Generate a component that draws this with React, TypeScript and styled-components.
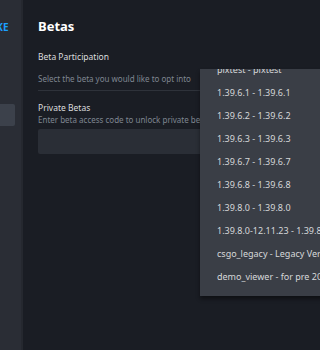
import React from "react";
import styled, { createGlobalStyle } from "styled-components";

const GlobalStyle = createGlobalStyle`
  html, body {
    margin: 0;
    padding: 0;
    background: #1a1d24;
  }
  body {
    font-family: "Noto Sans", "Open Sans", sans-serif;
  }
`;

const Page = styled.div`
  display: flex;
  width: 320px;
  height: 350px;
  overflow: hidden;
  position: relative;
  background: #1a1d24;
`;

const Sidebar = styled.div`
  width: 21px;
  flex-shrink: 0;
  background: #2a2d35;
  border-right: 2px solid #25282f;
  padding-top: 20px;
  overflow: hidden;
`;

const Brand = styled.div`
  width: 9px;
  height: 14px;
  overflow: hidden;
  direction: rtl;
  color: #1a9fff;
  font-size: 10px;
  line-height: 14px;
  font-weight: 700;
  white-space: nowrap;
  letter-spacing: 0.3px;
`;

const NavItem = styled.div<{ $active?: boolean }>`
  height: 22px;
  width: 15px;
  margin-top: ${(p) => (p.$active ? "70px" : "0")};
  background: ${(p) => (p.$active ? "#3c414b" : "transparent")};
  border-radius: 0 2px 2px 0;
`;

const Main = styled.div`
  flex: 1;
  padding: 17px 0 0 15px;
  min-width: 0;
`;

const Heading = styled.h1`
  margin: 0;
  color: #ffffff;
  font-size: 13px;
  font-weight: 700;
  line-height: 18px;
`;

const Label = styled.div<{ $gap: number }>`
  margin-top: ${(p) => p.$gap}px;
  color: #dcdedf;
  font-size: 8.5px;
  line-height: 12px;
  white-space: nowrap;
`;

const Hint = styled.div<{ $gap: number }>`
  margin-top: ${(p) => p.$gap}px;
  color: #7f8691;
  font-size: 8px;
  line-height: 11px;
  white-space: nowrap;
`;

const Divider = styled.div`
  margin-top: 6px;
  height: 1px;
  background: #2e323a;
`;

const Input = styled.div`
  margin-top: 4px;
  height: 25px;
  background: #2a2e36;
  border-radius: 2px;
`;

const Dropdown = styled.div`
  position: absolute;
  left: 200px;
  top: 69px;
  width: 140px;
  height: 227px;
  background: #3a3e46;
  box-shadow: 0 3px 4px rgba(0, 0, 0, 0.45);
  overflow: hidden;
`;

const List = styled.div`
  margin-top: -11px;
`;

const Option = styled.div`
  height: 23px;
  line-height: 23px;
  padding-left: 17px;
  color: #d6d8da;
  font-size: 9px;
  white-space: nowrap;
`;

const options = [
  "pixtest - pixtest",
  "1.39.6.1 - 1.39.6.1",
  "1.39.6.2 - 1.39.6.2",
  "1.39.6.3 - 1.39.6.3",
  "1.39.6.7 - 1.39.6.7",
  "1.39.6.8 - 1.39.6.8",
  "1.39.8.0 - 1.39.8.0",
  "1.39.8.0-12.11.23 - 1.39.8.0-12.11.23",
  "csgo_legacy - Legacy Version",
  "demo_viewer - for pre 2022 demos",
];

export default function App() {
  return (
    <>
      <GlobalStyle />
      <Page>
        <Sidebar>
          <Brand>KE</Brand>
          <NavItem $active />
        </Sidebar>
        <Main>
          <Heading>Betas</Heading>
          <Label $gap={16}>Beta Participation</Label>
          <Hint $gap={10}>Select the beta you would like to opt into</Hint>
          <Divider />
          <Label $gap={11}>Private Betas</Label>
          <Hint $gap={0}>Enter beta access code to unlock private betas</Hint>
          <Input />
        </Main>
        <Dropdown>
          <List>
            {options.map((o) => (
              <Option key={o}>{o}</Option>
            ))}
          </List>
        </Dropdown>
      </Page>
    </>
  );
}
